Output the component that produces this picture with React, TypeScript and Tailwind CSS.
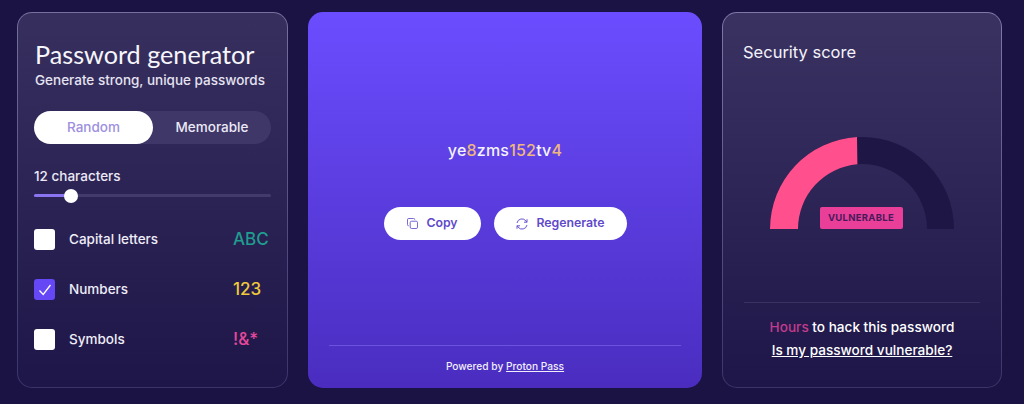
import React from "react";

function Row({ label, checked, tag, color }: { label: string; checked?: boolean; tag: string; color: string }) {
  return (
    <div className="flex items-center h-[21px]">
      {checked ? (
        <div className="w-[21px] h-[21px] rounded-[3px] bg-[#6547f5] flex items-center justify-center">
          <svg width="14" height="14" viewBox="0 0 14 14" fill="none" stroke="#ffffff" strokeWidth="1.3"><path d="M1.5 7.5 L5.2 11.5 L12.5 2" /></svg>
        </div>
      ) : (
        <div className="w-[21px] h-[21px] rounded-[3px] bg-white" />
      )}
      <span className="ml-[14px] text-[13.5px] text-[#efedf8] font-medium">{label}</span>
      <span className={`ml-auto w-[38px] text-[17px] font-medium whitespace-nowrap ${color}`}>{tag}</span>
    </div>
  );
}

export default function App() {
  return (
    <div className="w-[1024px] h-[404px] overflow-hidden bg-[#1b1344] flex gap-5 pl-[17px] pt-3 font-['Inter',sans-serif] antialiased">
      <div className="w-[271px] h-[376px] rounded-[15px] border border-transparent px-[16px] pt-[26px] text-white [background:linear-gradient(#37305f,#1e1648)_padding-box,linear-gradient(#77719f,#3b3468)_border-box]">
        <div className="ml-[1px] font-['Lato',sans-serif] text-[25.2px] leading-[30px] text-[#f7f6fb] whitespace-nowrap">Password generator</div>
        <div className="ml-[1px] text-[13.5px] leading-[20px] mt-[1px] font-medium text-[#e6e3f2] whitespace-nowrap">Generate strong, unique passwords</div>
        <div className="mt-[21px] w-[237px] h-[33px] rounded-full bg-[#3e3768] flex items-center text-[13.5px] font-medium">
          <div className="w-[119px] h-[33px] rounded-full bg-white text-[#9d90e0] flex items-center justify-center">Random</div>
          <div className="flex-1 flex items-center justify-center text-[#ece9f6]">Memorable</div>
        </div>
        <div className="mt-[22px] text-[13.5px] leading-[20px] font-medium text-[#ece9f6]">12 characters</div>
        <div className="relative mt-[8px] h-[3px] w-[237px] rounded-full bg-[#423b6b]">
          <div className="h-[3px] w-[34px] rounded-full bg-[#8b74f0]" />
          <div className="absolute left-[30px] top-[-5.5px] w-[14px] h-[14px] rounded-full bg-white" />
        </div>
        <div className="mt-[32px] flex flex-col gap-[29px]">
          <Row label="Capital letters" tag="ABC" color="text-[#1f9d8f]" />
          <Row label="Numbers" checked tag="123" color="text-[#eec93a]" />
          <Row label="Symbols" tag="!&*" color="text-[#e5489b]" />
        </div>
      </div>

      <div className="w-[394px] h-[376px] rounded-[15px] bg-[linear-gradient(#6b4dff,#4a2dbf)] px-5 flex flex-col items-center">
        <div className="mt-[127px] text-[16px] leading-[22px] font-medium tracking-[0.2px] text-[#f4f2fc]">
          ye<span className="text-[#efb77c]">8</span>zms<span className="text-[#efb77c]">152</span>tv<span className="text-[#efb77c]">4</span>
        </div>
        <div className="mt-[46px] flex gap-[13px]">
          <div className="w-[97px] h-[33px] rounded-full bg-white flex items-center justify-center gap-[8px] pl-[1px] text-[12.3px] font-semibold text-[#5f49c9]">
            <svg width="11" height="11" viewBox="0 0 12 12" fill="none" stroke="#6a55cf" strokeWidth="1"><rect x="3.5" y="3.5" width="8" height="8" rx="1.5" /><path d="M8.5 1.8 A1.3 1.3 0 0 0 7.2 .5 H2 A1.5 1.5 0 0 0 .5 2 V7.2 A1.3 1.3 0 0 0 1.8 8.5" /></svg>
            Copy
          </div>
          <div className="w-[133px] h-[33px] rounded-full bg-white flex items-center justify-center gap-[8px] pl-[1px] text-[12.3px] font-semibold text-[#5f49c9]">
            <svg width="12" height="12" viewBox="0 0 12 12" fill="none" stroke="#6a55cf" strokeWidth="1"><path d="M1 5 A5 5 0 0 1 10 3 L11 4.2 M11 1.2 V4.2 H8" /><path d="M11 7 A5 5 0 0 1 2 9 L1 7.8 M1 10.8 V7.8 H4" /></svg>
            Regenerate
          </div>
        </div>
        <div className="mt-auto w-[352px] border-t border-[#6b53dd] h-[43px] flex items-center justify-center text-[10.2px] font-medium text-[#f1eefb]">
          <span>Powered by <span className="underline">Proton Pass</span></span>
        </div>
      </div>

      <div className="w-[280px] h-[376px] rounded-[15px] border border-transparent px-5 flex flex-col text-white [background:linear-gradient(#3a3362,#1e1648)_padding-box,linear-gradient(#8079a8,#3b3468)_border-box]">
        <div className="mt-[28px] text-[16.5px] leading-[22px] text-[#f4f2fb]">Security score</div>
        <div className="relative mt-[74px] self-center w-[184px] h-[93px] mr-[1px]">
          <svg width="184" height="93" viewBox="0 0 184 93">
            <path d="M0 92 A92 92 0 0 1 184 92 H157 A65 65 0 0 0 27 92 Z" fill="#1e1745" />
            <path d="M0 92 A92 92 0 0 1 87 .1 L87.4 27.2 A65 65 0 0 0 28 92 Z" fill="#ff4f8d" />
          </svg>
          <div className="absolute left-[50px] top-[70px] w-[83px] h-[22px] rounded-[2px] bg-[#ea3f98] flex items-center justify-center text-[9.5px] font-bold tracking-[0.3px] text-[#481a5c]">VULNERABLE</div>
        </div>
        <div className="mt-[72px] border-t border-[#39325f] pt-[13px] text-center text-[13.6px] leading-[23px] font-medium mx-[1px]">
          <div className="whitespace-nowrap"><span className="text-[#c23c8e]">Hours</span> to hack this password</div>
          <div className="underline whitespace-nowrap">Is my password vulnerable?</div>
        </div>
      </div>
    </div>
  );
}
